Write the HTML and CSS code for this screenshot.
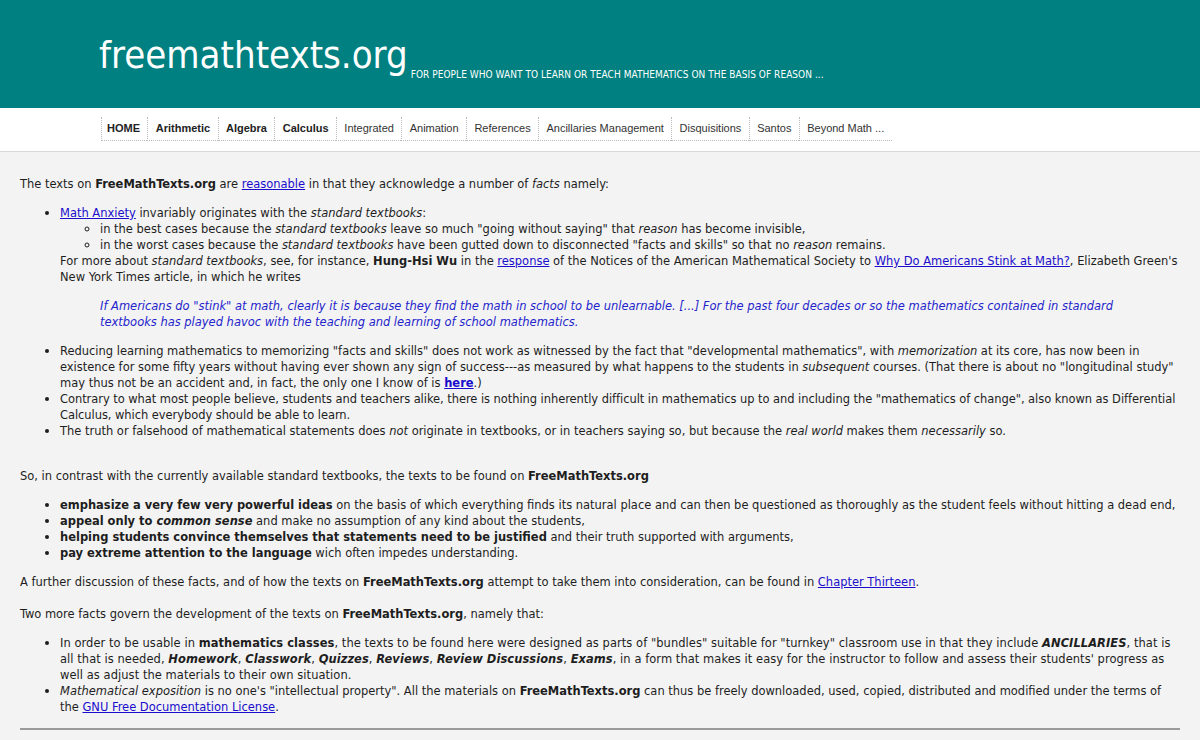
FILE: index.html
```html
<!DOCTYPE html>
<html lang="en">
<head>
<meta charset="utf-8">
<title>freemathtexts.org</title>
<link rel="stylesheet" href="styles.css">
</head>
<body>
<header class="masthead">
  <div class="brand">
    <span class="site-title">freemathtexts.org</span>
    <span class="tagline">FOR PEOPLE WHO WANT TO LEARN OR TEACH MATHEMATICS ON THE BASIS OF REASON ...</span>
  </div>
</header>
<nav class="topnav">
  <ul class="menu">
    <li class="menu-item strong first">HOME</li>
    <li class="menu-item strong">Arithmetic</li>
    <li class="menu-item strong">Algebra</li>
    <li class="menu-item strong">Calculus</li>
    <li class="menu-item">Integrated</li>
    <li class="menu-item">Animation</li>
    <li class="menu-item">References</li>
    <li class="menu-item">Ancillaries Management</li>
    <li class="menu-item">Disquisitions</li>
    <li class="menu-item">Santos</li>
    <li class="menu-item">Beyond Math ...</li>
  </ul>
</nav>
<main class="content">
  <p class="para">The texts on <b>FreeMathTexts.org</b> are <a href="#">reasonable</a> in that they acknowledge a number of <i>facts</i> namely:</p>
  <ul class="list">
    <li><a href="#">Math Anxiety</a> invariably originates with the <i>standard textbooks</i>:
      <ul class="sublist">
        <li>in the best cases because the <i>standard textbooks</i> leave so much "going without saying" that <i>reason</i> has become invisible,</li>
        <li>in the worst cases because the <i>standard textbooks</i> have been gutted down to disconnected "facts and skills" so that no <i>reason</i> remains.</li>
      </ul>
      For more about <i>standard textbooks</i>, see, for instance, <b>Hung-Hsi Wu</b> in the <a href="#">response</a> of the Notices of the American Mathematical Society to <a href="#">Why Do Americans Stink at Math?</a>, Elizabeth Green's New York Times article, in which he writes
      <blockquote class="quote">If Americans do "stink" at math, clearly it is because they find the math in school to be unlearnable. [...] For the past four decades or so the mathematics contained in standard textbooks has played havoc with the teaching and learning of school mathematics.</blockquote>
    </li>
    <li>Reducing learning mathematics to memorizing "facts and skills" does not work as witnessed by the fact that "developmental mathematics", with <i>memorization</i> at its core, has now been in existence for some fifty years without having ever shown any sign of success---as measured by what happens to the students in <i>subsequent</i> courses. (That there is about no "longitudinal study" may thus not be an accident and, in fact, the only one I know of is <a href="#"><b>here</b></a>.)</li>
    <li class="tight">Contrary to what most people believe, students and teachers alike, there is nothing inherently difficult in mathematics up to and including the "mathematics of change", also known as Differential Calculus, which everybody should be able to learn.</li>
    <li>The truth or falsehood of mathematical statements does <i>not</i> originate in textbooks, or in teachers saying so, but because the <i>real world</i> makes them <i>necessarily</i> so.</li>
  </ul>
  <p class="para spaced">So, in contrast with the currently available standard textbooks, the texts to be found on <b>FreeMathTexts.org</b></p>
  <ul class="list">
    <li><b>emphasize a very few very powerful ideas</b> on the basis of which everything finds its natural place and can then be questioned as thoroughly as the student feels without hitting a dead end,</li>
    <li><b>appeal only to <i>common sense</i></b> and make no assumption of any kind about the students,</li>
    <li><b>helping students convince themselves that statements need to be justified</b> and their truth supported with arguments,</li>
    <li><b>pay extreme attention to the language</b> wich often impedes understanding.</li>
  </ul>
  <p class="para">A further discussion of these facts, and of how the texts on <b>FreeMathTexts.org</b> attempt to take them into consideration, can be found in <a href="#">Chapter Thirteen</a>.</p>
  <p class="para gap">Two more facts govern the development of the texts on <b>FreeMathTexts.org</b>, namely that:</p>
  <ul class="list">
    <li class="loose">In order to be usable in <b>mathematics classes</b>, the texts to be found here were designed as parts of "bundles" suitable for "turnkey" classroom use in that they include <b><i>ANCILLARIES</i></b>, that is all that is needed, <b><i>Homework</i></b>, <b><i>Classwork</i></b>, <b><i>Quizzes</i></b>, <b><i>Reviews</i></b>, <b><i>Review Discussions</i></b>, <b><i>Exams</i></b>, in a form that makes it easy for the instructor to follow and assess their students' progress as well as adjust the materials to their own situation.</li>
    <li><i>Mathematical exposition</i> is no one's "intellectual property". All the materials on <b>FreeMathTexts.org</b> can thus be freely downloaded, used, copied, distributed and modified under the terms of the <a href="#">GNU Free Documentation License</a>.</li>
  </ul>
  <hr class="rule">
</main>
</body>
</html>
```
FILE: styles.css
```css
html, body {
  margin: 0;
  padding: 0;
}
body {
  background: #f3f3f3;
  color: #1e1e1e;
  font-family: "DejaVu Sans Condensed", "DejaVu Sans", sans-serif;
  font-stretch: condensed;
  font-size: 12.75px;
  line-height: 16px;
}
.masthead {
  background: #008080;
  height: 108px;
  box-sizing: border-box;
  padding: 34px 0 0 99px;
}
.brand {
  display: flex;
  align-items: flex-end;
}
.site-title {
  color: #fff;
  font-size: 38px;
  line-height: 42px;
}
.tagline {
  color: #fff;
  font-size: 10px;
  line-height: 12px;
  margin-left: 3px;
  margin-bottom: -5px;
  letter-spacing: 0.05px;
}
.topnav {
  background: #fff;
  height: 43px;
  border-bottom: 1px solid #d8d8d8;
  box-sizing: content-box;
}
.menu {
  list-style: none;
  margin: 0;
  padding: 9px 0 0 101px;
  display: flex;
}
.menu-item {
  font-family: "Liberation Sans", Arial, sans-serif;
  font-stretch: normal;
  font-size: 11px;
  line-height: 23px;
  color: #333;
  padding: 0 7.4px;
  border-left: 1px dotted #bbb;
  border-bottom: 1px dotted #bbb;
}
.menu-item.first {
  padding-left: 5px;
}
.menu-item.strong {
  font-weight: bold;
  color: #222;
}
.content {
  padding: 24px 20px 1px;
}
.para {
  margin: 0 0 13px;
}
.para.spaced {
  margin-top: 29px;
}
.para.gap {
  margin-top: 16px;
}
.list {
  margin: 13px 0;
  padding-left: 40px;
}
.tight {
  letter-spacing: -0.05px;
}
.loose {
  letter-spacing: 0.06px;
}
.sublist {
  list-style: circle;
  margin: 0;
  padding-left: 40px;
}
.quote {
  margin: 13px 40px;
  color: #2424cc;
  font-style: italic;
}
a {
  color: #1a0dcc;
}
.rule {
  border: 0;
  border-top: 2px solid #9a9a9a;
  margin: 12px 0 0;
}
```
